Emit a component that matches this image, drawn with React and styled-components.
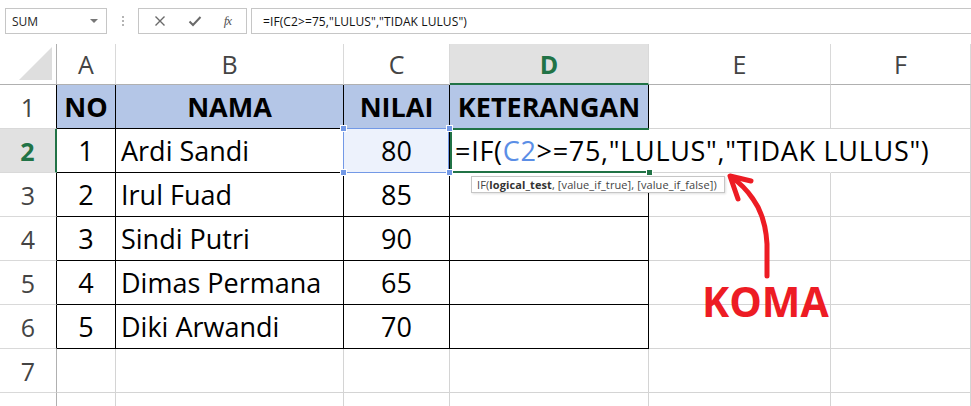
import React from "react";
import styled, { createGlobalStyle, css } from "styled-components";

const GlobalStyle = createGlobalStyle`
  html, body {
    margin: 0;
    padding: 0;
    background: #fff;
  }
  body {
    font-family: "Open Sans", "Noto Sans", sans-serif;
    overflow: hidden;
  }
`;

const Page = styled.div`
  position: relative;
  width: 971px;
  height: 406px;
  overflow: hidden;
  background: #fff;
`;

/* ---------- formula bar ---------- */

const FormulaBar = styled.div`
  height: 44px;
  box-sizing: border-box;
  padding: 8px 0 0 5px;
  display: flex;
  align-items: flex-start;
`;

const box = css`
  box-sizing: border-box;
  height: 26px;
  border: 1px solid #c6c6c6;
  background: #fff;
  display: flex;
  align-items: center;
`;

const NameBox = styled.div`
  ${box};
  width: 102px;
  padding: 0 8px 0 6px;
  justify-content: space-between;
  font-size: 12px;
  color: #262626;
`;

const Caret = styled.span`
  width: 0;
  height: 0;
  border-left: 4px solid transparent;
  border-right: 4px solid transparent;
  border-top: 4px solid #777;
`;

const Grip = styled.div`
  width: 31px;
  height: 26px;
  display: flex;
  flex-direction: column;
  align-items: center;
  justify-content: center;
  gap: 2px;
  span {
    width: 2px;
    height: 2px;
    background: #b4b4b4;
  }
`;

const ToolBox = styled.div`
  ${box};
  width: 109px;
  justify-content: space-around;
  padding: 0 4px;
  color: #6a6a6a;
`;

const Fx = styled.span`
  font-family: "Liberation Serif", "DejaVu Serif", serif;
  font-style: italic;
  font-size: 13px;
  color: #555;
  letter-spacing: -1px;
`;

const FormulaInput = styled.div`
  ${box};
  flex: 1;
  margin-left: 4px;
  padding-left: 11px;
  border-right: none;
  font-size: 12px;
  letter-spacing: 0.1px;
  color: #111;
  white-space: nowrap;
`;

/* ---------- sheet grid ---------- */

const Sheet = styled.div`
  display: grid;
  grid-template-columns: 57px 59px 228px 106px 199px 182px 140px;
  grid-template-rows: 41px repeat(8, 44px);
`;

const Cell = styled.div`
  position: relative;
  box-sizing: border-box;
  display: flex;
  align-items: center;
  justify-content: ${(p) => (p.$left ? "flex-start" : "center")};
  padding-left: ${(p) => (p.$left ? "5px" : "0")};
  font-size: 27px;
  color: #000;
  white-space: nowrap;
  border-right: 1px solid ${(p) => p.$rc || "#d4d4d4"};
  border-bottom: 1px solid ${(p) => p.$bc || "#d4d4d4"};
  background: ${(p) => p.$bg || "transparent"};
  font-weight: ${(p) => (p.$bold ? 700 : 400)};
`;

const ColHead = styled.div`
  box-sizing: border-box;
  display: flex;
  align-items: center;
  justify-content: center;
  font-size: 25px;
  border-right: 1px solid #d9d9d9;
  border-bottom: ${(p) => (p.$active ? "2px solid #217346" : "1px solid #b0b0b0")};
  background: ${(p) => (p.$active ? "#e1e1e1" : "#fff")};
  color: ${(p) => (p.$active ? "#217346" : "#444")};
  font-weight: ${(p) => (p.$active ? 700 : 400)};
`;

const Corner = styled.div`
  box-sizing: border-box;
  border-right: 1px solid #b0b0b0;
  border-bottom: 1px solid #b0b0b0;
  display: flex;
  align-items: flex-end;
  justify-content: flex-end;
  padding: 0 4px 4px 0;
  span {
    width: 0;
    height: 0;
    border-left: 33px solid transparent;
    border-bottom: 33px solid #dedede;
  }
`;

const RowHead = styled.div`
  box-sizing: border-box;
  display: flex;
  align-items: center;
  justify-content: center;
  font-size: 25px;
  border-bottom: 1px solid #d9d9d9;
  border-right: ${(p) =>
    p.$active ? "2px solid #217346" : `1px solid ${p.$rc || "#b0b0b0"}`};
  background: ${(p) => (p.$active ? "#e1e1e1" : "#fff")};
  color: ${(p) => (p.$active ? "#217346" : "#444")};
  font-weight: ${(p) => (p.$active ? 700 : 400)};
`;

const Handle = styled.i`
  position: absolute;
  width: 5px;
  height: 5px;
  background: ${(p) => p.$color};
  border: 1px solid #fff;
  z-index: 3;
`;

const RefCell = styled(Cell)`
  background: #edf2fc;
  &::after {
    content: "";
    position: absolute;
    inset: -1px 0 -1px -1px;
    border: 1px solid #7399e6;
    pointer-events: none;
  }
`;

const EditCell = styled(Cell)`
  z-index: 2;
  justify-content: flex-start;
  padding-left: 5px;
  overflow: visible;
  letter-spacing: 0.7px;
  &::after {
    content: "";
    position: absolute;
    inset: -1px -1px -1px 0;
    border-top: 2px solid #217346;
    border-left: 2px solid #217346;
    border-bottom: 2px solid #217346;
    pointer-events: none;
  }
`;

const Ref = styled.span`
  color: #5b8ee6;
`;

/* ---------- overlays ---------- */

const Tip = styled.div`
  position: absolute;
  left: 471px;
  top: 176px;
  height: 17px;
  box-sizing: border-box;
  padding: 0 7px 0 5px;
  border: 1px solid #c6c6c6;
  background: #fff;
  box-shadow: 1px 1px 2px rgba(0, 0, 0, 0.12);
  font-size: 11px;
  letter-spacing: 0.1px;
  line-height: 15px;
  color: #444;
  white-space: nowrap;
  z-index: 5;
  b {
    font-weight: 700;
    color: #333;
  }
`;

const Koma = styled.div`
  position: absolute;
  left: 702px;
  top: 273px;
  font-size: 41px;
  font-weight: 700;
  color: #ed1c24;
  z-index: 5;
`;

const ArrowSvg = styled.svg`
  position: absolute;
  left: 0;
  top: 0;
  z-index: 5;
  pointer-events: none;
`;

const cols = ["A", "B", "C", "D", "E", "F"];

const rows = [
  ["1", "Ardi Sandi", "80"],
  ["2", "Irul Fuad", "85"],
  ["3", "Sindi Putri", "90"],
  ["4", "Dimas Permana", "65"],
  ["5", "Diki Arwandi", "70"],
];

function Formula() {
  return (
    <>
      =IF(<Ref>C2</Ref>&gt;=75,"LULUS","TIDAK LULUS")
    </>
  );
}

export default function App() {
  return (
    <Page>
      <GlobalStyle />
      <FormulaBar>
        <NameBox>
          SUM
          <Caret />
        </NameBox>
        <Grip>
          <span />
          <span />
          <span />
        </Grip>
        <ToolBox>
          <svg width="12" height="12" viewBox="0 0 12 12">
            <path d="M1.5 1.5 L10.5 10.5 M10.5 1.5 L1.5 10.5" stroke="#6a6a6a" strokeWidth="1.4" />
          </svg>
          <svg width="14" height="12" viewBox="0 0 14 12">
            <path d="M1.5 6.5 L5 10 L12.5 2" stroke="#6a6a6a" strokeWidth="2" fill="none" />
          </svg>
          <Fx>fx</Fx>
        </ToolBox>
        <FormulaInput>=IF(C2&gt;=75,"LULUS","TIDAK LULUS")</FormulaInput>
      </FormulaBar>

      <Sheet>
        <Corner>
          <span />
        </Corner>
        {cols.map((c) => (
          <ColHead key={c} $active={c === "D"}>
            {c}
          </ColHead>
        ))}

        {/* row 1 */}
        <RowHead $rc="#000">1</RowHead>
        {["NO", "NAMA", "NILAI", "KETERANGAN"].map((t) => (
          <Cell key={t} $bold $bg="#b4c6e7" $rc="#000" $bc="#000">
            {t}
          </Cell>
        ))}
        <Cell />
        <Cell />

        {rows.map((r, i) => {
          const n = i + 2;
          const active = n === 2;
          return (
            <React.Fragment key={n}>
              <RowHead $active={active} $rc="#000">
                {n}
              </RowHead>
              <Cell $rc="#000" $bc="#000">
                {r[0]}
              </Cell>
              <Cell $left $rc="#000" $bc="#000">
                {r[1]}
              </Cell>
              {active ? (
                <RefCell $rc="#000" $bc="#000">
                  {r[2]}
                  <Handle $color="#7399e6" style={{ left: -4, top: -4 }} />
                  <Handle $color="#7399e6" style={{ right: -4, top: -4 }} />
                  <Handle $color="#7399e6" style={{ left: -4, bottom: -4 }} />
                  <Handle $color="#7399e6" style={{ right: -4, bottom: -4 }} />
                </RefCell>
              ) : (
                <Cell $rc="#000" $bc="#000">
                  {r[2]}
                </Cell>
              )}
              {active ? (
                <EditCell $rc="transparent" $bc="#000">
                  <Formula />
                  <Handle $color="#217346" style={{ left: 196, bottom: -4 }} />
                </EditCell>
              ) : (
                <Cell $rc="#000" $bc="#000" />
              )}
              <Cell $rc={active ? "transparent" : undefined} />
              <Cell />
            </React.Fragment>
          );
        })}

        {/* rows 7 and 8 (row 8 is cut off by the window edge) */}
        {[7, 8].map((n) => (
          <React.Fragment key={n}>
            <RowHead>{n === 7 ? n : ""}</RowHead>
            <Cell />
            <Cell />
            <Cell />
            <Cell />
            <Cell />
            <Cell />
          </React.Fragment>
        ))}
      </Sheet>

      <Tip>
        IF(<b>logical_test</b>, [value_if_true], [value_if_false])
      </Tip>

      <ArrowSvg width="971" height="406" viewBox="0 0 971 406">
        <path
          d="M767 276 L767 244 C766 226 761 210 753 199 C747 190 740 183 731 177"
          stroke="#ed1c24"
          strokeWidth="5"
          strokeLinecap="round"
          fill="none"
        />
        <path
          d="M738 199 L730 176 L751 181"
          stroke="#ed1c24"
          strokeWidth="5"
          strokeLinecap="round"
          strokeLinejoin="round"
          fill="none"
        />
      </ArrowSvg>
      <Koma>KOMA</Koma>
    </Page>
  );
}
